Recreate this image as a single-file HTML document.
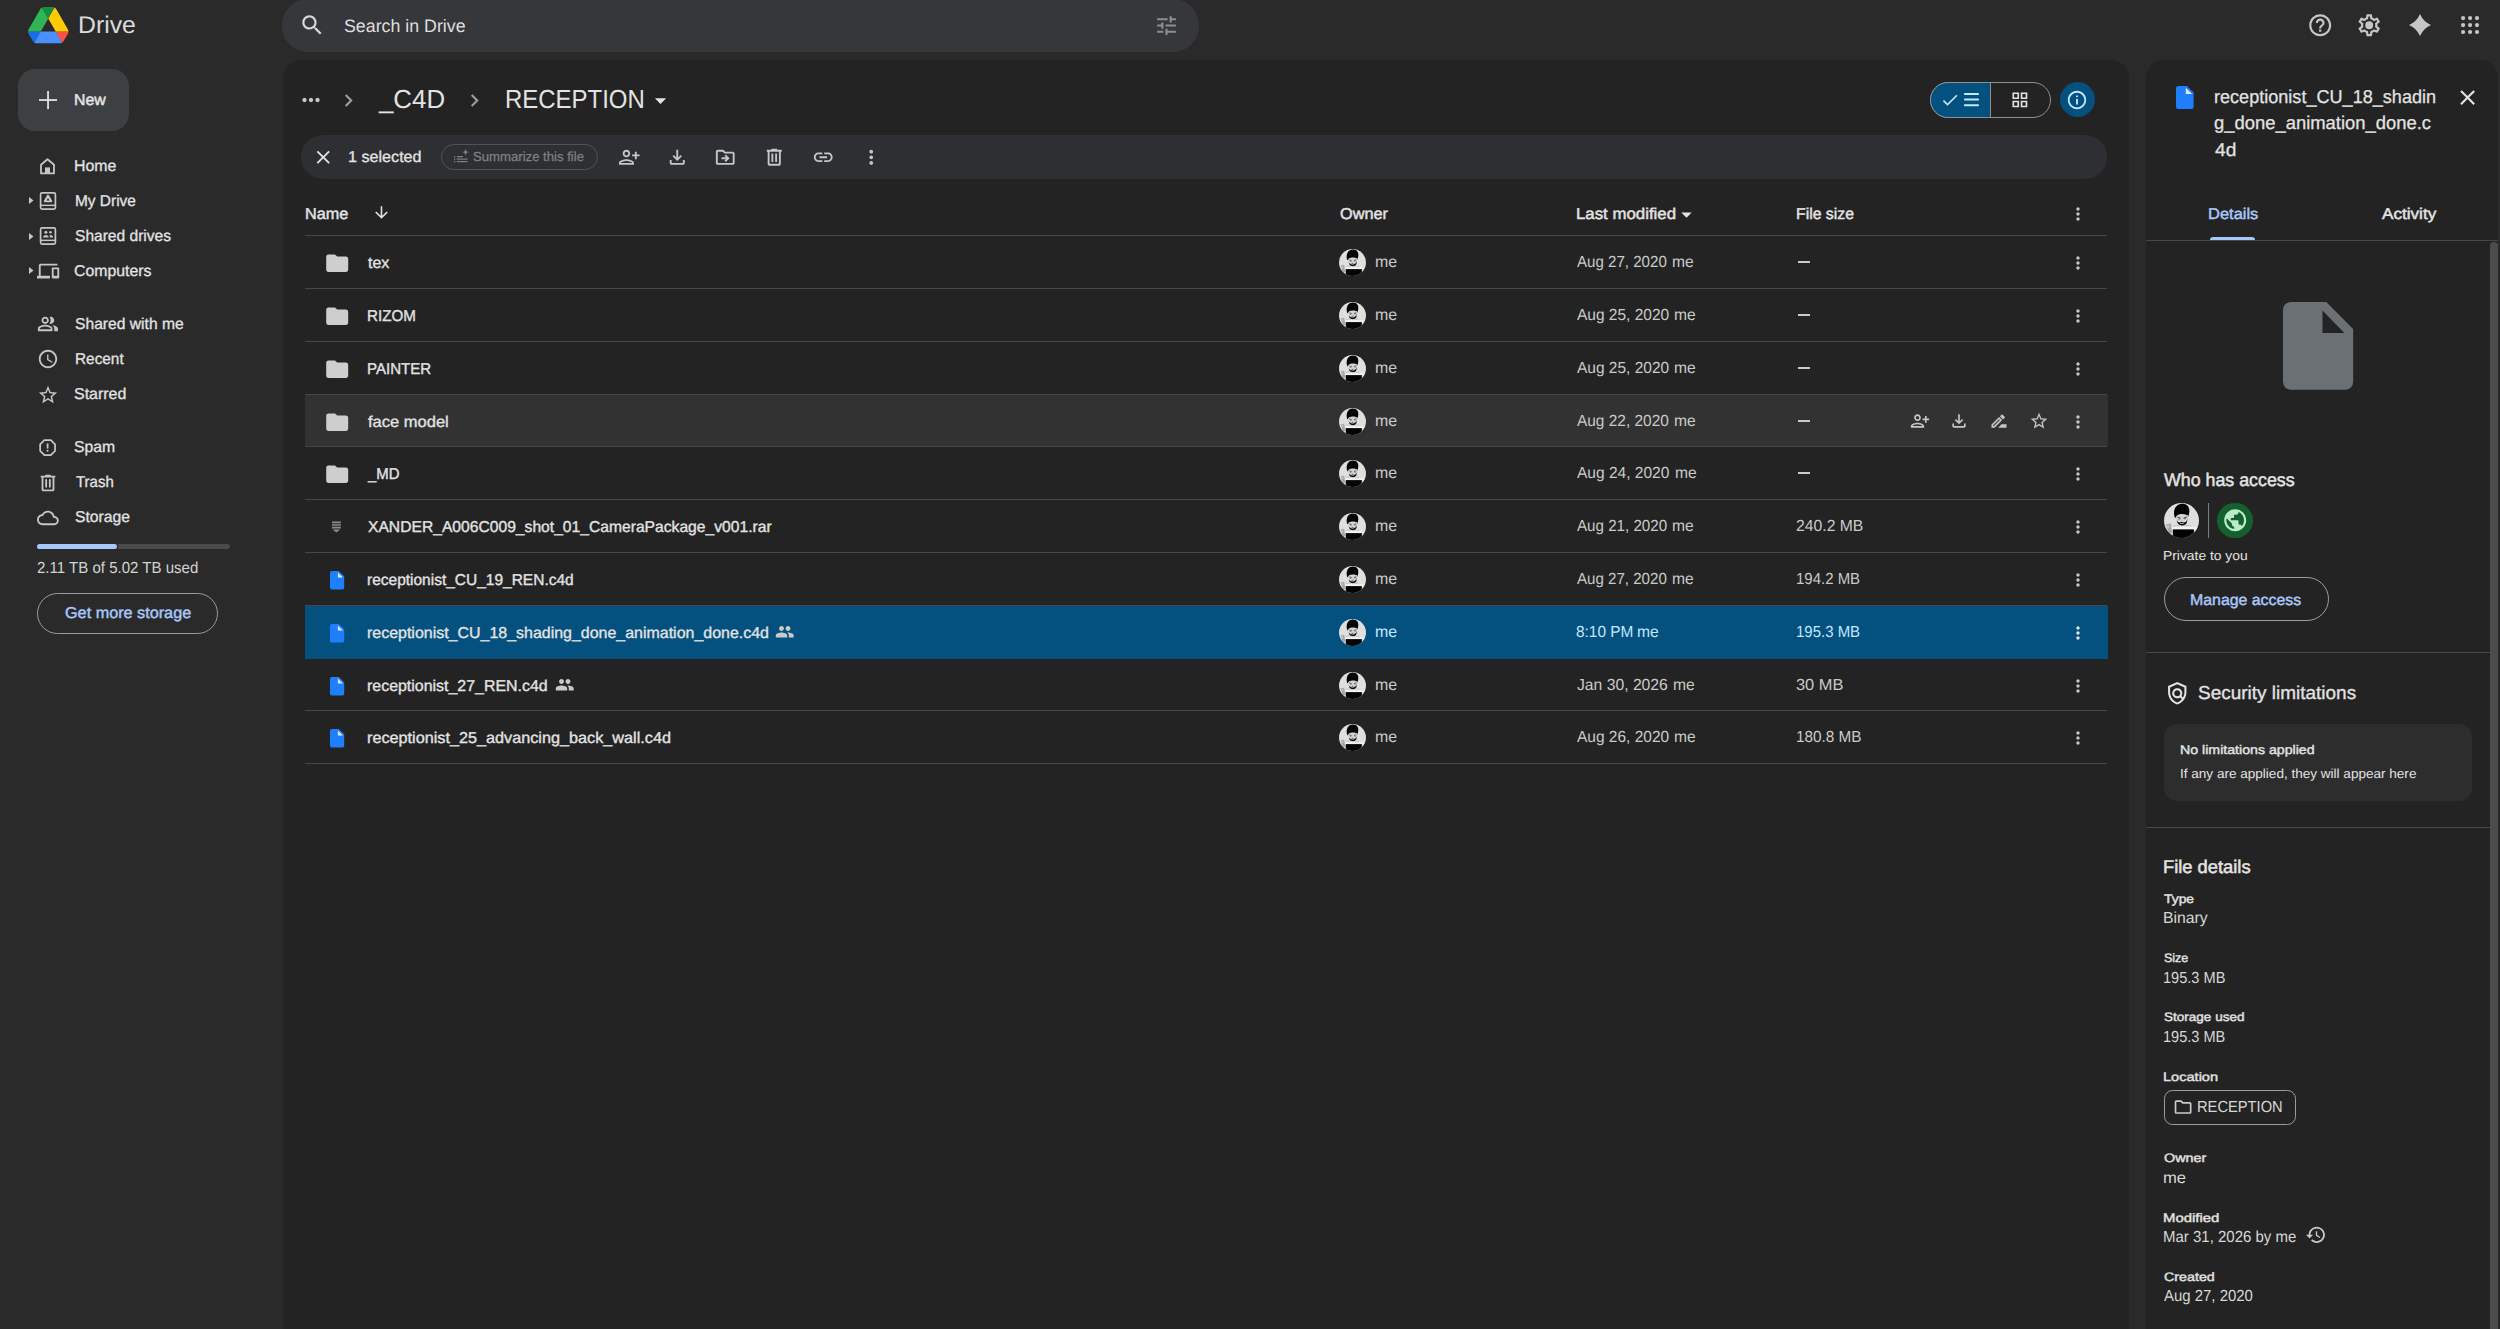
<!DOCTYPE html>
<html><head><meta charset="utf-8"><title>RECEPTION - Google Drive</title>
<style>
html,body{margin:0;padding:0;}
body{width:2500px;height:1329px;overflow:hidden;background:#2a2a2a;font-family:"Liberation Sans",sans-serif;position:relative;}
.t{position:absolute;white-space:nowrap;line-height:30px;height:30px;transform-origin:0 50%;text-rendering:geometricPrecision;}
.b{position:absolute;box-sizing:border-box;}
.ic{position:absolute;display:block;overflow:visible;}
.av{border-radius:50%;overflow:hidden;}
</style></head><body>

<svg class="ic" style="left:27.7px;top:6.5px;width:40.5px;height:36.2px" viewBox="0 0 87.3 78"><path d="m6.6 66.85 3.85 6.65c.8 1.4 1.95 2.5 3.3 3.3l13.750-23.800h-27.500c0 1.550.4 3.100 1.200 4.500z" fill="#1a6fe6"/><path d="m43.650 25-13.750-23.800c-1.350.8-2.500 1.900-3.300 3.300l-25.400 44a9.060 9.060 0 0 0 -1.200 4.500h27.500z" fill="#2fb457"/><path d="m73.550 76.800c1.350-.8 2.500-1.900 3.300-3.300l1.600-2.750 7.650-13.250c.8-1.400 1.200-2.950 1.200-4.500h-27.502l5.852 11.500z" fill="#ff5141"/><path d="m43.650 25 13.750-23.800c-1.350-.8-2.900-1.200-4.500-1.200h-18.500c-1.600 0-3.150.45-4.500 1.200z" fill="#188f3e"/><path d="m59.800 53h-32.300l-13.750 23.800c1.350.8 2.900 1.200 4.500 1.200h50.800c1.600 0 3.150-.45 4.500-1.200z" fill="#4a90ff"/><path d="m73.400 26.500-12.700-22c-.8-1.400-1.950-2.500-3.300-3.300l-13.750 23.800 16.150 28h27.450c0-1.550-.4-3.100-1.200-4.500z" fill="#ffcb05"/></svg>
<div class="t" id="t1" style="left:77.74px;top:11.00px;font-size:24.1px;color:#dcdcdc;transform:scaleX(1.0283);">Drive</div>
<div class="b" style="left:282px;top:-1px;width:917px;height:52.5px;background:#36373a;border-radius:26px;"></div>
<svg class="ic" style="left:299.4px;top:11.6px;width:26.4px;height:26.4px" viewBox="0 0 24 24" fill="#d6d8d6" ><path d="M15.5 14h-.79l-.28-.27C15.41 12.59 16 11.11 16 9.5 16 5.91 13.09 3 9.5 3S3 5.91 3 9.5 5.91 16 9.5 16c1.61 0 3.09-.59 4.23-1.57l.27.28v.79l5 4.99L20.49 19l-4.99-5zm-6 0C7.01 14 5 11.99 5 9.5S7.01 5 9.5 5 14 7.01 14 9.5 11.99 14 9.5 14z"/></svg>
<div class="t" id="t2" style="left:343.61px;top:11.00px;font-size:18.0px;color:#dfdfdf;transform:scaleX(0.9876);">Search in Drive</div>
<svg class="ic" style="left:1154.0px;top:12.5px;width:25px;height:25px" viewBox="0 0 24 24" fill="#8d9092" ><path d="M3 17v2h6v-2H3zM3 5v2h10V5H3zm10 16v-2h8v-2h-8v-2h-2v6h2zM7 9v2H3v2h4v2h2V9H7zm14 4v-2H11v2h10zm-6-4h2V7h4V5h-4V3h-2v6z"/></svg>
<svg class="ic" style="left:2307.0px;top:11.9px;width:26.4px;height:26.4px" viewBox="0 0 24 24" fill="#c4c7c5" ><path d="M11 18h2v-2h-2v2zm1-16C6.48 2 2 6.48 2 12s4.48 10 10 10 10-4.48 10-10S17.52 2 12 2zm0 18c-4.41 0-8-3.59-8-8s3.59-8 8-8 8 3.590 8 8-3.590 8-8 8zm0-14c-2.21 0-4 1.79-4 4h2c0-1.1.9-2 2-2s2 .9 2 2c0 2-3 1.75-3 5h2c0-2.25 3-2.5 3-5 0-2.21-1.79-4-4-4z"/></svg>
<svg class="ic" style="left:2355.8px;top:11.8px;width:26.4px;height:26.4px" viewBox="0 0 24 24" fill="#c4c7c5" ><path d="M19.43 12.98c.04-.32.07-.64.07-.98 0-.34-.03-.66-.07-.98l2.11-1.65c.19-.15.24-.42.12-.64l-2-3.46c-.09-.16-.26-.25-.44-.25-.06 0-.12.01-.17.03l-2.49 1c-.52-.4-1.08-.73-1.69-.98l-.38-2.65C14.46 2.18 14.25 2 14 2h-4c-.25 0-.46.18-.49.42l-.38 2.65c-.61.25-1.17.59-1.69.98l-2.49-1c-.06-.02-.12-.03-.18-.03-.17 0-.34.09-.43.25l-2 3.46c-.13.22-.07.49.12.64l2.11 1.65c-.04.32-.07.65-.07.98 0 .33.03.66.07.98l-2.11 1.65c-.19.15-.24.42-.12.64l2 3.46c.09.16.26.25.44.25.06 0 .12-.01.17-.03l2.49-1c.52.4 1.08.73 1.69.98l.38 2.65c.03.24.24.42.49.42h4c.25 0 .46-.18.49-.42l.38-2.65c.61-.25 1.17-.59 1.69-.98l2.49 1c.06.02.12.03.18.03.17 0 .34-.09.43-.25l2-3.46c.12-.22.07-.49-.12-.64l-2.11-1.65zm-1.980-1.710c.04.31.05.52.05.73 0 .21-.02.43-.05.73l-.14 1.130.89.7 1.080.84-.7 1.210-1.270-.51-1.040-.42-.9.68c-.43.32-.84.56-1.250.73l-1.060.43-.16 1.130-.2 1.350h-1.400l-.19-1.350-.16-1.130-1.060-.43c-.43-.18-.83-.41-1.230-.71l-.91-.7-1.060.43-1.270.51-.7-1.210 1.080-.84.89-.7-.14-1.130c-.03-.31-.05-.54-.05-.74s.02-.43.05-.73l.14-1.130-.89-.7-1.080-.84.7-1.210 1.270.51 1.040.42.9-.68c.43-.32.84-.56 1.250-.73l1.060-.43.16-1.130.2-1.350h1.390l.19 1.350.16 1.130 1.060.43c.43.18.83.41 1.230.71l.91.7 1.060-.43 1.270-.51.7 1.210-1.070.85-.89.7.14 1.130zM12 8.400a3.600 3.600 0 1 0 0 7.200 3.600 3.600 0 0 0 0-7.200z"/></svg>
<svg class="ic" style="left:2408.0px;top:13.1px;width:24px;height:24px" viewBox="0 0 24 24" fill="#c4c7c5" ><path d="M12 1Q15.300 8.700 23 12 15.300 15.300 12 23 8.700 15.300 1 12 8.700 8.700 12 1z"/></svg>
<svg class="ic" style="left:2461.1px;top:16.2px;width:18.1px;height:18.1px" viewBox="0 0 18.1 18.1" fill="#c4c7c5"><circle cx="2.1" cy="2.1" r="2.1"/><circle cx="2.1" cy="9.05" r="2.1"/><circle cx="2.1" cy="16.0" r="2.1"/><circle cx="9.05" cy="2.1" r="2.1"/><circle cx="9.05" cy="9.05" r="2.1"/><circle cx="9.05" cy="16.0" r="2.1"/><circle cx="16.0" cy="2.1" r="2.1"/><circle cx="16.0" cy="9.05" r="2.1"/><circle cx="16.0" cy="16.0" r="2.1"/></svg>
<div class="b" style="left:18px;top:69px;width:111px;height:62px;background:#3d4043;border-radius:17px;"></div>
<svg class="ic" style="left:38.950px;top:91.050px;width:18.100px;height:18.100px" viewBox="0 0 18.100 18.100" fill="#e3e3e3"><rect x="8.150" width="1.800" height="18.100"/><rect y="8.150" width="18.100" height="1.800"/></svg>
<div class="t" id="t3" style="left:74.49px;top:86.00px;font-size:15.7px;color:#e3e3e3;-webkit-text-stroke:0.5px #e3e3e3;transform:scaleX(1.0097);">New</div>
<svg class="ic" style="left:40.300px;top:157.7px;width:15px;height:16.400px" viewBox="0 0 15 16.400" fill="#c4c7c5"><path d="M7.500 1.200L1 6.800V15.400h13V6.800z" fill="none" stroke="#c4c7c5" stroke-width="1.800" stroke-linejoin="round"/><path d="M5 9.400h5V15.400H5z"/></svg>
<div class="t" id="t4" style="left:74.49px;top:152.00px;font-size:15.7px;color:#e3e3e3;-webkit-text-stroke:0.3px #e3e3e3;transform:scaleX(1.0125);">Home</div>
<svg class="ic" style="left:39.00px;top:191.80px;width:18px;height:18px" viewBox="0 0 16.6 18" fill="#c4c7c5" ><path d="M2.400 .900h11.800a1.500 1.500 0 0 1 1.500 1.500v13.200a1.500 1.500 0 0 1-1.500 1.500H2.400a1.500 1.500 0 0 1-1.500-1.500V2.400A1.500 1.500 0 0 1 2.400 .900z" fill="none" stroke="#c4c7c5" stroke-width="1.700"/><path d="M1 12.600h14.600v1.500H1z"/><path d="M8.300 3.600l3.300 5.600H5z" stroke="#c4c7c5" stroke-width="2" stroke-linejoin="round"/><path d="M8.300 6.100L6.900 8.500h2.800z" fill="#2a2a2a"/></svg>
<svg class="ic" style="left:28.6px;top:197.3px;width:4.5px;height:7px" viewBox="0 0 4.5 7" fill="#c4c7c5"><path d="M0 0l4.500 3.500-4.500 3.500z"/></svg>
<div class="t" id="t5" style="left:74.52px;top:187.00px;font-size:15.7px;color:#e3e3e3;-webkit-text-stroke:0.3px #e3e3e3;transform:scaleX(0.9836);">My Drive</div>
<svg class="ic" style="left:39.00px;top:227.00px;width:18px;height:18px" viewBox="0 0 16.6 18" fill="#c4c7c5" ><path d="M2.400 .900h11.800a1.500 1.500 0 0 1 1.500 1.500v13.200a1.500 1.500 0 0 1-1.500 1.500H2.400a1.500 1.500 0 0 1-1.500-1.500V2.400A1.500 1.500 0 0 1 2.400 .900z" fill="none" stroke="#c4c7c5" stroke-width="1.700"/><path d="M1 12.600h14.600v1.500H1z"/><circle cx="6.200" cy="5.200" r="1.500"/><circle cx="10.800" cy="5.300" r="1.300"/><path d="M3.400 10.400c0-1.800 1.800-2.500 2.800-2.500s2.800.7 2.800 2.500zM9.800 8c.3-.1.700-.1 1-.1 1 0 2.600.7 2.600 2.500h-3.200c0-1-.1-1.700-.4-2.400z"/></svg>
<svg class="ic" style="left:28.6px;top:232.5px;width:4.5px;height:7px" viewBox="0 0 4.5 7" fill="#c4c7c5"><path d="M0 0l4.500 3.500-4.500 3.500z"/></svg>
<div class="t" id="t6" style="left:74.51px;top:222.00px;font-size:15.7px;color:#e3e3e3;-webkit-text-stroke:0.3px #e3e3e3;transform:scaleX(0.9917);">Shared drives</div>
<svg class="ic" style="left:37.1px;top:259.5px;width:22.2px;height:22.2px" viewBox="0 0 24 24" fill="#c4c7c5" ><path d="M4 6h18V4H4c-1.100 0-2 .9-2 2v11H0v3h14v-3H4V6zm19 2h-6c-.55 0-1 .45-1 1v10c0 .55.45 1 1 1h6c.55 0 1-.45 1-1V9c0-.55-.45-1-1-1zm-1 9h-4v-7h4v7z"/></svg>
<svg class="ic" style="left:28.6px;top:267.3px;width:4.5px;height:7px" viewBox="0 0 4.5 7" fill="#c4c7c5"><path d="M0 0l4.500 3.500-4.500 3.500z"/></svg>
<div class="t" id="t7" style="left:74.49px;top:257.00px;font-size:15.7px;color:#e3e3e3;-webkit-text-stroke:0.3px #e3e3e3;transform:scaleX(1.0105);">Computers</div>
<svg class="ic" style="left:37.0px;top:312.5px;width:21.8px;height:21.8px" viewBox="0 0 24 24" fill="#c4c7c5" ><path d="M16.670 13.130C18.040 14.060 19 15.320 19 17v3h4v-3c0-2.180-3.570-3.470-6.330-3.870zM15 12c2.210 0 4-1.790 4-4s-1.790-4-4-4c-.47 0-.91.1-1.330.24C14.500 5.270 15 6.580 15 8s-.5 2.730-1.330 3.760c.42.14.86.24 1.330.24zM9 12c2.210 0 4-1.790 4-4s-1.790-4-4-4-4 1.790-4 4 1.790 4 4 4zm0-6c1.100 0 2 .9 2 2s-.9 2-2 2-2-.9-2-2 .9-2 2-2zM9 13c-2.670 0-8 1.340-8 4v3h16v-3c0-2.660-5.330-4-8-4zm6 5H3v-.99C3.200 16.290 6.300 15 9 15s5.800 1.290 6 2v1z"/></svg>
<div class="t" id="t8" style="left:74.50px;top:310.00px;font-size:15.7px;color:#e3e3e3;-webkit-text-stroke:0.3px #e3e3e3;transform:scaleX(0.9972);">Shared with me</div>
<svg class="ic" style="left:37.0px;top:348.0px;width:22px;height:22px" viewBox="0 0 24 24" fill="#c4c7c5" ><path d="M11.990 2C6.470 2 2 6.480 2 12s4.470 10 9.990 10C17.520 22 22 17.520 22 12S17.520 2 11.990 2zM12 20c-4.420 0-8-3.580-8-8s3.580-8 8-8 8 3.580 8 8-3.580 8-8 8zm.5-13H11v6l5.250 3.150.75-1.230-4.500-2.670z"/></svg>
<div class="t" id="t9" style="left:74.52px;top:345.00px;font-size:15.7px;color:#e3e3e3;-webkit-text-stroke:0.3px #e3e3e3;transform:scaleX(0.9796);">Recent</div>
<svg class="ic" style="left:37.0px;top:384.0px;width:22px;height:22px" viewBox="0 0 24 24" fill="#c4c7c5" ><path d="M22 9.240l-7.190-.62L12 2 9.190 8.630 2 9.240l5.460 4.730L5.820 21 12 17.270 18.180 21l-1.630-7.030L22 9.240zM12 15.400l-3.760 2.270 1-4.280-3.320-2.880 4.380-.38L12 6.100l1.710 4.040 4.380.38-3.320 2.880 1 4.280L12 15.400z"/></svg>
<div class="t" id="t10" style="left:74.48px;top:380.00px;font-size:15.7px;color:#e3e3e3;-webkit-text-stroke:0.3px #e3e3e3;transform:scaleX(1.0180);">Starred</div>
<svg class="ic" style="left:39.30px;top:438.80px;width:17.2px;height:17.2px" viewBox="0 0 18 18" fill="#c4c7c5" ><path d="M5.600 1.200h6.800l4.400 4.400v6.800l-4.400 4.400H5.600L1.200 12.400V5.600z" fill="none" stroke="#c4c7c5" stroke-width="1.800" stroke-linejoin="round"/><path d="M8.100 4.600h1.800v5.400H8.100z"/><circle cx="9" cy="12.300" r="1.050"/></svg>
<div class="t" id="t11" style="left:74.49px;top:433.00px;font-size:15.7px;color:#e3e3e3;-webkit-text-stroke:0.3px #e3e3e3;transform:scaleX(1.0051);">Spam</div>
<svg class="ic" style="left:36.9px;top:471.8px;width:22px;height:22px" viewBox="0 0 24 24" fill="#c4c7c5" ><path d="M7 21c-.55 0-1.020-.2-1.410-.59C5.200 20.020 5 19.550 5 19V6H4V4h5V3h6v1h5v2h-1v13c0 .55-.2 1.020-.59 1.410-.39.39-.86.59-1.410.59H7zM17 6H7v13h10V6zM9 17h2V8H9v9zm4 0h2V8h-2v9z"/></svg>
<div class="t" id="t12" style="left:75.50px;top:468.00px;font-size:15.7px;color:#e3e3e3;-webkit-text-stroke:0.3px #e3e3e3;transform:scaleX(0.9564);">Trash</div>
<svg class="ic" style="left:37.1px;top:507.3px;width:21.8px;height:21.8px" viewBox="0 0 24 24" fill="#c4c7c5" ><path d="M19.350 10.040C18.670 6.590 15.640 4 12 4 9.110 4 6.600 5.640 5.350 8.040 2.340 8.360 0 10.910 0 14c0 3.310 2.690 6 6 6h13c2.760 0 5-2.240 5-5 0-2.640-2.050-4.780-4.650-4.960zM19 18H6c-2.210 0-4-1.790-4-4 0-2.050 1.530-3.760 3.560-3.970l1.070-.11.5-.95C8.080 7.140 9.940 6 12 6c2.620 0 4.880 1.860 5.390 4.430l.3 1.500 1.530.11c1.560.1 2.780 1.410 2.780 2.960 0 1.650-1.350 3-3 3z"/></svg>
<div class="t" id="t13" style="left:74.50px;top:503.00px;font-size:15.7px;color:#e3e3e3;-webkit-text-stroke:0.3px #e3e3e3;transform:scaleX(1.0019);">Storage</div>
<div class="b" style="left:37px;top:544px;width:193px;height:5px;background:#4a4c4b;border-radius:2.5px;"></div>
<div class="b" style="left:37px;top:544px;width:79.5px;height:5px;background:#a8c7fa;border-radius:2.5px;box-shadow:1.500px 0 0 #2a2a2a;"></div>
<div class="t" id="t14" style="left:36.96px;top:554.00px;font-size:16.0px;color:#d3d5d3;transform:scaleX(0.9394);">2.11 TB of 5.02 TB used</div>
<div class="b" style="left:37px;top:593px;width:181px;height:41px;background:transparent;border-radius:20.5px;border:1px solid #9a9d9b;"></div>
<div class="t" id="t15" style="left:65.10px;top:599.00px;font-size:15.7px;color:#a8c7fa;-webkit-text-stroke:0.45px #a8c7fa;transform:scaleX(1.0336);">Get more storage</div>
<div class="b" style="left:283px;top:60px;width:1846px;height:1290px;background:#232323;border-radius:18px;"></div>
<svg class="ic" style="left:298.0px;top:87.0px;width:26px;height:26px" viewBox="0 0 24 24" fill="#c4c7c5" ><path d="M6 10c-1.100 0-2 .9-2 2s.9 2 2 2 2-.9 2-2-.9-2-2-2zm12 0c-1.100 0-2 .9-2 2s.9 2 2 2 2-.9 2-2-.9-2-2-2zm-6 0c-1.100 0-2 .9-2 2s.9 2 2 2 2-.9 2-2-.9-2-2-2z"/></svg>
<svg class="ic" style="left:335.7px;top:87.8px;width:25px;height:25px" viewBox="0 0 24 24" fill="#9aa0a6" ><path d="M10 6L8.590 7.410 13.170 12l-4.580 4.590L10 18l6-6z"/></svg>
<div class="t" id="t16" style="left:379.30px;top:84.00px;font-size:26px;color:#e3e3e3;transform:scaleX(0.9938);">_C4D</div>
<svg class="ic" style="left:461.8px;top:87.8px;width:25px;height:25px" viewBox="0 0 24 24" fill="#9aa0a6" ><path d="M10 6L8.590 7.410 13.170 12l-4.580 4.590L10 18l6-6z"/></svg>
<div class="t" id="t17" style="left:505.06px;top:84.00px;font-size:26px;color:#e3e3e3;transform:scaleX(0.9216);">RECEPTION</div>
<svg class="ic" style="left:646.5px;top:86.7px;width:27px;height:27px" viewBox="0 0 24 24" fill="#e3e3e3" ><path d="M7 10l5 5 5-5z"/></svg>
<div class="b" style="left:1930px;top:82px;width:120.5px;height:35.5px;background:transparent;border-radius:18px;border:1px solid #8e918f;"></div>
<div class="b" style="left:1930px;top:82px;width:60.5px;height:35.5px;background:#04507e;border:1px solid #8e918f;border-radius:18px 0 0 18px;"></div>
<svg class="ic" style="left:1939.6px;top:89.7px;width:20px;height:20px" viewBox="0 0 24 24" fill="#c2e7ff" ><path d="M9 16.170L4.830 12l-1.420 1.410L9 19 21 7l-1.410-1.410z"/></svg>
<svg class="ic" style="left:1964.200px;top:92.100px;width:15px;height:15.200px" viewBox="0 0 15 15.200" fill="#c2e7ff"><rect width="15" height="2" y="1" rx=".8"/><rect width="15" height="2" y="6.600" rx=".8"/><rect width="15" height="2" y="12.200" rx=".8"/></svg>
<svg class="ic" style="left:2009.8px;top:90.0px;width:19.8px;height:19.8px" viewBox="0 0 24 24" fill="#e3e3e3" ><path d="M3 3v8h8V3H3zm6 6H5V5h4v4zm-6 4v8h8v-8H3zm6 6H5v-4h4v4zm4-16v8h8V3h-8zm6 6h-4V5h4v4zm-6 4v8h8v-8h-8zm6 6h-4v-4h4v4z"/></svg>
<div class="b" style="left:2059.8px;top:82px;width:35px;height:35px;background:#04507e;border-radius:18px;"></div>
<svg class="ic" style="left:2066.2px;top:88.9px;width:22px;height:22px" viewBox="0 0 24 24" fill="#c2e7ff" ><path d="M11 7h2v2h-2zm0 4h2v6h-2zm1-9C6.480 2 2 6.480 2 12s4.480 10 10 10 10-4.480 10-10S17.520 2 12 2zm0 18c-4.410 0-8-3.590-8-8s3.590-8 8-8 8 3.590 8 8-3.590 8-8 8z"/></svg>
<div class="b" style="left:301px;top:135px;width:1806px;height:44px;background:#2e2f32;border-radius:22px;"></div>
<svg class="ic" style="left:311.9px;top:145.8px;width:22.5px;height:22.5px" viewBox="0 0 24 24" fill="#e3e3e3" ><path d="M19 6.410L17.590 5 12 10.590 6.410 5 5 6.410 10.590 12 5 17.590 6.410 19 12 13.410 17.590 19 19 17.590 13.410 12z"/></svg>
<div class="t" id="t18" style="left:347.87px;top:143.00px;font-size:15.7px;color:#e3e3e3;-webkit-text-stroke:0.3px #e3e3e3;transform:scaleX(1.0286);">1 selected</div>
<div class="b" style="left:441px;top:144px;width:157px;height:26px;background:transparent;border-radius:13px;border:1px solid #505355;"></div>
<div class="t" id="t19" style="left:472.90px;top:142.00px;font-size:13.1px;color:#7c7f81;-webkit-text-stroke:0.3px #7c7f81;transform:scaleX(1.0037);">Summarize this file</div>
<svg class="ic" style="left:453.600px;top:148.700px;width:14.500px;height:13.500px" viewBox="0 0 14.500 13.500" fill="#7c7f81"><path d="M0 7h1.400v1.200H0zM2.800 7h6.200v1.200H2.800zM0 9.600h1.400v1.200H0zM2.800 9.600h10.700v1.200H2.800zM0 12.100h1.400v1.200H0zM2.800 12.100h10.700v1.200H2.800zM11.500 0l1 2.300 2 .9-2 .9-1 2.300-1-2.300-2-.9 2-.9z"/></svg>
<svg class="ic" style="left:617.8px;top:145.6px;width:22.5px;height:22.5px" viewBox="0 0 24 24" fill="#c4c7c5" ><path d="M9 12c2.210 0 4-1.790 4-4s-1.790-4-4-4-4 1.790-4 4 1.790 4 4 4zm0-6c1.100 0 2 .9 2 2s-.9 2-2 2-2-.9-2-2 .9-2 2-2zm0 8c-2.670 0-8 1.340-8 4v2h16v-2c0-2.660-5.330-4-8-4zm6 4H3v-.010C3.200 17.290 6.300 16 9 16s5.800 1.290 6 2zM20 9V6h-2v3h-3v2h3v3h2v-3h3V9h-3z"/></svg>
<svg class="ic" style="left:665.8px;top:145.6px;width:22.5px;height:22.5px" viewBox="0 0 24 24" fill="#c4c7c5" ><path d="M12 16l-5-5 1.400-1.450 2.600 2.600V4h2v8.150l2.600-2.600L17 11l-5 5zM6 20c-.55 0-1.020-.2-1.410-.59C4.200 19.020 4 18.550 4 18v-3h2v3h12v-3h2v3c0 .55-.2 1.020-.59 1.410-.39.39-.86.59-1.410.59H6z"/></svg>
<svg class="ic" style="left:713.8px;top:145.6px;width:22.5px;height:22.5px" viewBox="0 0 24 24" fill="#c4c7c5" ><path d="M20 6h-8l-2-2H4c-1.100 0-2 .9-2 2v12c0 1.100.9 2 2 2h16c1.100 0 2-.9 2-2V8c0-1.100-.9-2-2-2zm0 12H4V6h5.170l2 2H20v10zm-7.160-4H8v-2h4.840l-1.590-1.590L12.660 9l4 4-4 4-1.410-1.410L12.840 14z"/></svg>
<svg class="ic" style="left:762.8px;top:145.6px;width:22.5px;height:22.5px" viewBox="0 0 24 24" fill="#c4c7c5" ><path d="M7 21c-.55 0-1.020-.2-1.410-.59C5.200 20.020 5 19.550 5 19V6H4V4h5V3h6v1h5v2h-1v13c0 .55-.2 1.020-.59 1.410-.39.39-.86.59-1.410.59H7zM17 6H7v13h10V6zM9 17h2V8H9v9zm4 0h2V8h-2v9z"/></svg>
<svg class="ic" style="left:811.8px;top:145.6px;width:22.5px;height:22.5px" viewBox="0 0 24 24" fill="#c4c7c5" ><path d="M3.900 12c0-1.710 1.390-3.100 3.100-3.100h4V7H7c-2.760 0-5 2.240-5 5s2.240 5 5 5h4v-1.900H7c-1.710 0-3.100-1.390-3.100-3.100zM8 13h8v-2H8v2zm9-6h-4v1.900h4c1.710 0 3.100 1.390 3.100 3.100s-1.390 3.100-3.100 3.100h-4V17h4c2.760 0 5-2.240 5-5s-2.240-5-5-5z"/></svg>
<svg class="ic" style="left:859.8px;top:145.6px;width:22.5px;height:22.5px" viewBox="0 0 24 24" fill="#c4c7c5" ><path d="M12 8c1.100 0 2-.9 2-2s-.9-2-2-2-2 .9-2 2 .9 2 2 2zm0 2c-1.100 0-2 .9-2 2s.9 2 2 2 2-.9 2-2-.9-2-2-2zm0 6c-1.100 0-2 .9-2 2s.9 2 2 2 2-.9 2-2-.9-2-2-2z"/></svg>
<div class="t" id="t20" style="left:305.26px;top:200.00px;font-size:15.7px;color:#e3e3e3;-webkit-text-stroke:0.45px #e3e3e3;transform:scaleX(1.0350);">Name</div>
<svg class="ic" style="left:371.7px;top:203.2px;width:19px;height:19px" viewBox="0 0 24 24" fill="#e3e3e3" ><path d="M20 12l-1.410-1.410L13 16.170V4h-2v12.170l-5.580-5.590L4 12l8 8 8-8z"/></svg>
<div class="t" id="t21" style="left:1340.40px;top:200.00px;font-size:15.7px;color:#e3e3e3;-webkit-text-stroke:0.45px #e3e3e3;transform:scaleX(1.0370);">Owner</div>
<div class="t" id="t22" style="left:1575.63px;top:200.00px;font-size:15.7px;color:#e3e3e3;-webkit-text-stroke:0.45px #e3e3e3;transform:scaleX(1.0717);">Last modified</div>
<svg class="ic" style="left:1673.7px;top:201.5px;width:25px;height:25px" viewBox="0 0 24 24" fill="#e3e3e3" ><path d="M7 10l5 5 5-5z"/></svg>
<div class="t" id="t23" style="left:1795.89px;top:200.00px;font-size:15.7px;color:#e3e3e3;-webkit-text-stroke:0.45px #e3e3e3;transform:scaleX(1.0071);">File size</div>
<svg class="ic" style="left:2068.0px;top:203.7px;width:20px;height:20px" viewBox="0 0 24 24" fill="#c4c7c5" ><path d="M12 8c1.100 0 2-.9 2-2s-.9-2-2-2-2 .9-2 2 .9 2 2 2zm0 2c-1.100 0-2 .9-2 2s.9 2 2 2 2-.9 2-2-.9-2-2-2zm0 6c-1.100 0-2 .9-2 2s.9 2 2 2 2-.9 2-2-.9-2-2-2z"/></svg>
<div class="b" style="left:305px;top:235px;width:1802px;height:1px;background:#474747;"></div>
<svg class="ic" style="left:323.6px;top:249.5px;width:26.4px;height:26.4px" viewBox="0 0 24 24" fill="#cecece" ><path d="M10 4H4c-1.100 0-1.990.9-1.990 2L2 18c0 1.100.9 2 2 2h16c1.100 0 2-.9 2-2V8c0-1.100-.9-2-2-2h-8l-2-2z"/></svg>
<div class="t" id="t24" style="left:367.90px;top:249.00px;font-size:15.7px;color:#e3e3e3;-webkit-text-stroke:0.35px #e3e3e3;transform:scaleX(1.0190);">tex</div>
<svg class="ic av" style="left:1339.40px;top:248.60px;width:27px;height:27px" viewBox="0 0 100 100"><g><rect width="100" height="100" fill="#dfdfdf"/><path d="M34 36C42 29 60 28 67 34L65.500 53C62 66 42 66 37 53z" fill="#d4d4d4"/><path d="M29 36C25 12 40 1 52 2 67 2 75 14 70.500 31L68.500 39C64 29 46 30 36.500 35L31.500 43z" fill="#040404"/><path d="M60 33l8 1-1 7z" fill="#b8b8b8"/><path d="M38 40.500l9 2M55 42.500l9.500-2.500" stroke="#1c1c1c" stroke-width="2.200"/><ellipse cx="43" cy="45" rx="3.200" ry="1.400" fill="#3a3a3a"/><ellipse cx="59.500" cy="44.700" rx="3.200" ry="1.400" fill="#3a3a3a"/><path d="M50.500 45l-2.500 8h6z" fill="#bdbdbd"/><path d="M35.500 44C37 52 39 55 43 55.500L50 54l7 1.500C62 55 64.500 51 66.500 43L65 54C62 67 42 67 37 54z" fill="#161616"/><path d="M38 54C42 66 60 66 64.500 54 60 57 42 57 38 54z" fill="#121212"/><rect x="45" y="57.500" width="11" height="2" rx="1" fill="#c9c9c9"/><path d="M26 66C33 61 41 63 44 64.500M58 64.500C62 63 70 62 75 66" stroke="#9d9d9d" stroke-width="1.400" fill="none"/><rect x="22" y="67.500" width="70" height="8" fill="#f2f2f2"/><path d="M5.500 60l14-2 3.500 26-9 2z" fill="#a6a6a6"/><path d="M8 62l6-1 1.500 9-5 1z" fill="#c4c4c4"/><rect x="25" y="74.500" width="59.500" height="30" fill="#040404"/></g></svg>
<div class="t" id="t25" style="left:1374.90px;top:248.00px;font-size:16.0px;color:#c9cbc9;transform:scaleX(0.9952);">me</div>
<div class="t" id="t26" style="left:1576.70px;top:248.00px;font-size:16.0px;color:#c9cbc9;transform:scaleX(0.9432);">Aug 27, 2020</div>
<div class="t" id="t27" style="left:1672.02px;top:248.00px;font-size:16.0px;color:#c9cbc9;transform:scaleX(0.9762);">me</div>
<div class="b" style="left:1797.5px;top:261px;width:12.3px;height:1.5px;background:#c9cbc9;"></div>
<svg class="ic" style="left:2068.0px;top:252.6px;width:20px;height:20px" viewBox="0 0 24 24" fill="#c4c7c5" ><path d="M12 8c1.100 0 2-.9 2-2s-.9-2-2-2-2 .9-2 2 .9 2 2 2zm0 2c-1.100 0-2 .9-2 2s.9 2 2 2 2-.9 2-2-.9-2-2-2zm0 6c-1.100 0-2 .9-2 2s.9 2 2 2 2-.9 2-2-.9-2-2-2z"/></svg>
<div class="b" style="left:305px;top:288px;width:1802px;height:1px;background:#474747;"></div>
<svg class="ic" style="left:323.6px;top:302.5px;width:26.4px;height:26.4px" viewBox="0 0 24 24" fill="#cecece" ><path d="M10 4H4c-1.100 0-1.990.9-1.990 2L2 18c0 1.100.9 2 2 2h16c1.100 0 2-.9 2-2V8c0-1.100-.9-2-2-2h-8l-2-2z"/></svg>
<div class="t" id="t28" style="left:366.93px;top:302.00px;font-size:15.7px;color:#e3e3e3;-webkit-text-stroke:0.35px #e3e3e3;transform:scaleX(0.9673);">RIZOM</div>
<svg class="ic av" style="left:1339.40px;top:301.60px;width:27px;height:27px" viewBox="0 0 100 100"><g><rect width="100" height="100" fill="#dfdfdf"/><path d="M34 36C42 29 60 28 67 34L65.500 53C62 66 42 66 37 53z" fill="#d4d4d4"/><path d="M29 36C25 12 40 1 52 2 67 2 75 14 70.500 31L68.500 39C64 29 46 30 36.500 35L31.500 43z" fill="#040404"/><path d="M60 33l8 1-1 7z" fill="#b8b8b8"/><path d="M38 40.500l9 2M55 42.500l9.500-2.500" stroke="#1c1c1c" stroke-width="2.200"/><ellipse cx="43" cy="45" rx="3.200" ry="1.400" fill="#3a3a3a"/><ellipse cx="59.500" cy="44.700" rx="3.200" ry="1.400" fill="#3a3a3a"/><path d="M50.500 45l-2.500 8h6z" fill="#bdbdbd"/><path d="M35.500 44C37 52 39 55 43 55.500L50 54l7 1.500C62 55 64.500 51 66.500 43L65 54C62 67 42 67 37 54z" fill="#161616"/><path d="M38 54C42 66 60 66 64.500 54 60 57 42 57 38 54z" fill="#121212"/><rect x="45" y="57.500" width="11" height="2" rx="1" fill="#c9c9c9"/><path d="M26 66C33 61 41 63 44 64.500M58 64.500C62 63 70 62 75 66" stroke="#9d9d9d" stroke-width="1.400" fill="none"/><rect x="22" y="67.500" width="70" height="8" fill="#f2f2f2"/><path d="M5.500 60l14-2 3.500 26-9 2z" fill="#a6a6a6"/><path d="M8 62l6-1 1.500 9-5 1z" fill="#c4c4c4"/><rect x="25" y="74.500" width="59.500" height="30" fill="#040404"/></g></svg>
<div class="t" id="t29" style="left:1374.90px;top:301.00px;font-size:16.0px;color:#c9cbc9;transform:scaleX(0.9952);">me</div>
<div class="t" id="t30" style="left:1576.70px;top:301.00px;font-size:16.0px;color:#c9cbc9;transform:scaleX(0.9674);">Aug 25, 2020</div>
<div class="t" id="t31" style="left:1674.32px;top:301.00px;font-size:16.0px;color:#c9cbc9;transform:scaleX(0.9762);">me</div>
<div class="b" style="left:1797.5px;top:314px;width:12.3px;height:1.5px;background:#c9cbc9;"></div>
<svg class="ic" style="left:2068.0px;top:305.6px;width:20px;height:20px" viewBox="0 0 24 24" fill="#c4c7c5" ><path d="M12 8c1.100 0 2-.9 2-2s-.9-2-2-2-2 .9-2 2 .9 2 2 2zm0 2c-1.100 0-2 .9-2 2s.9 2 2 2 2-.9 2-2-.9-2-2-2zm0 6c-1.100 0-2 .9-2 2s.9 2 2 2 2-.9 2-2-.9-2-2-2z"/></svg>
<div class="b" style="left:305px;top:341px;width:1802px;height:1px;background:#474747;"></div>
<svg class="ic" style="left:323.6px;top:355.5px;width:26.4px;height:26.4px" viewBox="0 0 24 24" fill="#cecece" ><path d="M10 4H4c-1.100 0-1.990.9-1.990 2L2 18c0 1.100.9 2 2 2h16c1.100 0 2-.9 2-2V8c0-1.100-.9-2-2-2h-8l-2-2z"/></svg>
<div class="t" id="t32" style="left:366.94px;top:355.00px;font-size:15.7px;color:#e3e3e3;-webkit-text-stroke:0.35px #e3e3e3;transform:scaleX(0.9600);">PAINTER</div>
<svg class="ic av" style="left:1339.40px;top:354.60px;width:27px;height:27px" viewBox="0 0 100 100"><g><rect width="100" height="100" fill="#dfdfdf"/><path d="M34 36C42 29 60 28 67 34L65.500 53C62 66 42 66 37 53z" fill="#d4d4d4"/><path d="M29 36C25 12 40 1 52 2 67 2 75 14 70.500 31L68.500 39C64 29 46 30 36.500 35L31.500 43z" fill="#040404"/><path d="M60 33l8 1-1 7z" fill="#b8b8b8"/><path d="M38 40.500l9 2M55 42.500l9.500-2.500" stroke="#1c1c1c" stroke-width="2.200"/><ellipse cx="43" cy="45" rx="3.200" ry="1.400" fill="#3a3a3a"/><ellipse cx="59.500" cy="44.700" rx="3.200" ry="1.400" fill="#3a3a3a"/><path d="M50.500 45l-2.500 8h6z" fill="#bdbdbd"/><path d="M35.500 44C37 52 39 55 43 55.500L50 54l7 1.500C62 55 64.500 51 66.500 43L65 54C62 67 42 67 37 54z" fill="#161616"/><path d="M38 54C42 66 60 66 64.500 54 60 57 42 57 38 54z" fill="#121212"/><rect x="45" y="57.500" width="11" height="2" rx="1" fill="#c9c9c9"/><path d="M26 66C33 61 41 63 44 64.500M58 64.500C62 63 70 62 75 66" stroke="#9d9d9d" stroke-width="1.400" fill="none"/><rect x="22" y="67.500" width="70" height="8" fill="#f2f2f2"/><path d="M5.500 60l14-2 3.500 26-9 2z" fill="#a6a6a6"/><path d="M8 62l6-1 1.500 9-5 1z" fill="#c4c4c4"/><rect x="25" y="74.500" width="59.500" height="30" fill="#040404"/></g></svg>
<div class="t" id="t33" style="left:1374.90px;top:354.00px;font-size:16.0px;color:#c9cbc9;transform:scaleX(0.9952);">me</div>
<div class="t" id="t34" style="left:1576.70px;top:354.00px;font-size:16.0px;color:#c9cbc9;transform:scaleX(0.9674);">Aug 25, 2020</div>
<div class="t" id="t35" style="left:1674.32px;top:354.00px;font-size:16.0px;color:#c9cbc9;transform:scaleX(0.9762);">me</div>
<div class="b" style="left:1797.5px;top:367px;width:12.3px;height:1.5px;background:#c9cbc9;"></div>
<svg class="ic" style="left:2068.0px;top:358.6px;width:20px;height:20px" viewBox="0 0 24 24" fill="#c4c7c5" ><path d="M12 8c1.100 0 2-.9 2-2s-.9-2-2-2-2 .9-2 2 .9 2 2 2zm0 2c-1.100 0-2 .9-2 2s.9 2 2 2 2-.9 2-2-.9-2-2-2zm0 6c-1.100 0-2 .9-2 2s.9 2 2 2 2-.9 2-2-.9-2-2-2z"/></svg>
<div class="b" style="left:305px;top:394px;width:1802px;height:1px;background:#474747;"></div>
<div class="b" style="left:305px;top:395px;width:1803px;height:51px;background:#323232;"></div>
<svg class="ic" style="left:323.6px;top:408.5px;width:26.4px;height:26.4px" viewBox="0 0 24 24" fill="#cecece" ><path d="M10 4H4c-1.100 0-1.990.9-1.990 2L2 18c0 1.100.9 2 2 2h16c1.100 0 2-.9 2-2V8c0-1.100-.9-2-2-2h-8l-2-2z"/></svg>
<div class="t" id="t36" style="left:367.90px;top:408.00px;font-size:15.7px;color:#e3e3e3;-webkit-text-stroke:0.35px #e3e3e3;transform:scaleX(1.0526);">face model</div>
<svg class="ic av" style="left:1339.40px;top:407.60px;width:27px;height:27px" viewBox="0 0 100 100"><g><rect width="100" height="100" fill="#dfdfdf"/><path d="M34 36C42 29 60 28 67 34L65.500 53C62 66 42 66 37 53z" fill="#d4d4d4"/><path d="M29 36C25 12 40 1 52 2 67 2 75 14 70.500 31L68.500 39C64 29 46 30 36.500 35L31.500 43z" fill="#040404"/><path d="M60 33l8 1-1 7z" fill="#b8b8b8"/><path d="M38 40.500l9 2M55 42.500l9.500-2.500" stroke="#1c1c1c" stroke-width="2.200"/><ellipse cx="43" cy="45" rx="3.200" ry="1.400" fill="#3a3a3a"/><ellipse cx="59.500" cy="44.700" rx="3.200" ry="1.400" fill="#3a3a3a"/><path d="M50.500 45l-2.500 8h6z" fill="#bdbdbd"/><path d="M35.500 44C37 52 39 55 43 55.500L50 54l7 1.500C62 55 64.500 51 66.500 43L65 54C62 67 42 67 37 54z" fill="#161616"/><path d="M38 54C42 66 60 66 64.500 54 60 57 42 57 38 54z" fill="#121212"/><rect x="45" y="57.500" width="11" height="2" rx="1" fill="#c9c9c9"/><path d="M26 66C33 61 41 63 44 64.500M58 64.500C62 63 70 62 75 66" stroke="#9d9d9d" stroke-width="1.400" fill="none"/><rect x="22" y="67.500" width="70" height="8" fill="#f2f2f2"/><path d="M5.500 60l14-2 3.500 26-9 2z" fill="#a6a6a6"/><path d="M8 62l6-1 1.500 9-5 1z" fill="#c4c4c4"/><rect x="25" y="74.500" width="59.500" height="30" fill="#040404"/></g></svg>
<div class="t" id="t37" style="left:1374.90px;top:407.00px;font-size:16.0px;color:#c9cbc9;transform:scaleX(0.9952);">me</div>
<div class="t" id="t38" style="left:1576.70px;top:407.00px;font-size:16.0px;color:#c9cbc9;transform:scaleX(0.9642);">Aug 22, 2020</div>
<div class="t" id="t39" style="left:1674.02px;top:407.00px;font-size:16.0px;color:#c9cbc9;transform:scaleX(0.9762);">me</div>
<div class="b" style="left:1797.5px;top:420px;width:12.3px;height:1.5px;background:#c9cbc9;"></div>
<svg class="ic" style="left:2068.0px;top:411.6px;width:20px;height:20px" viewBox="0 0 24 24" fill="#c4c7c5" ><path d="M12 8c1.100 0 2-.9 2-2s-.9-2-2-2-2 .9-2 2 .9 2 2 2zm0 2c-1.100 0-2 .9-2 2s.9 2 2 2 2-.9 2-2-.9-2-2-2zm0 6c-1.100 0-2 .9-2 2s.9 2 2 2 2-.9 2-2-.9-2-2-2z"/></svg>
<svg class="ic" style="left:1909.5px;top:410.7px;width:20px;height:20px" viewBox="0 0 24 24" fill="#c4c7c5" ><path d="M9 12c2.210 0 4-1.790 4-4s-1.790-4-4-4-4 1.790-4 4 1.790 4 4 4zm0-6c1.100 0 2 .9 2 2s-.9 2-2 2-2-.9-2-2 .9-2 2-2zm0 8c-2.670 0-8 1.340-8 4v2h16v-2c0-2.660-5.330-4-8-4zm6 4H3v-.010C3.200 17.290 6.300 16 9 16s5.800 1.290 6 2zM20 9V6h-2v3h-3v2h3v3h2v-3h3V9h-3z"/></svg>
<svg class="ic" style="left:1949.0px;top:410.7px;width:20px;height:20px" viewBox="0 0 24 24" fill="#c4c7c5" ><path d="M12 16l-5-5 1.400-1.450 2.600 2.600V4h2v8.150l2.600-2.600L17 11l-5 5zM6 20c-.55 0-1.020-.2-1.410-.59C4.200 19.020 4 18.550 4 18v-3h2v3h12v-3h2v3c0 .55-.2 1.020-.59 1.410-.39.39-.86.59-1.410.59H6z"/></svg>
<svg class="ic" style="left:1989.0px;top:410.7px;width:20px;height:20px" viewBox="0 0 24 24" fill="#c4c7c5" ><path d="M15 16l-4 4h10v-4h-6zm-2.940-8.810L3 16.250V20h3.750l9.060-9.060-3.750-3.750zM5.920 18H5v-.92l7.060-7.060.92.92L5.920 18zm12.790-9.710a.996.996 0 000-1.410l-2.340-2.340a1.001 1.001 0 00-1.410 0l-1.830 1.830 3.750 3.750 1.830-1.830z"/></svg>
<svg class="ic" style="left:2029.0px;top:410.7px;width:20px;height:20px" viewBox="0 0 24 24" fill="#c4c7c5" ><path d="M22 9.240l-7.190-.62L12 2 9.190 8.630 2 9.240l5.460 4.730L5.820 21 12 17.270 18.180 21l-1.630-7.030L22 9.240zM12 15.400l-3.760 2.270 1-4.280-3.320-2.880 4.380-.38L12 6.100l1.710 4.040 4.380.38-3.320 2.880 1 4.280L12 15.400z"/></svg>
<div class="b" style="left:305px;top:446px;width:1802px;height:1px;background:#474747;"></div>
<svg class="ic" style="left:323.6px;top:460.5px;width:26.4px;height:26.4px" viewBox="0 0 24 24" fill="#cecece" ><path d="M10 4H4c-1.100 0-1.990.9-1.990 2L2 18c0 1.100.9 2 2 2h16c1.100 0 2-.9 2-2V8c0-1.100-.9-2-2-2h-8l-2-2z"/></svg>
<div class="t" id="t40" style="left:367.90px;top:460.00px;font-size:15.7px;color:#e3e3e3;-webkit-text-stroke:0.35px #e3e3e3;transform:scaleX(0.9515);">_MD</div>
<svg class="ic av" style="left:1339.40px;top:459.60px;width:27px;height:27px" viewBox="0 0 100 100"><g><rect width="100" height="100" fill="#dfdfdf"/><path d="M34 36C42 29 60 28 67 34L65.500 53C62 66 42 66 37 53z" fill="#d4d4d4"/><path d="M29 36C25 12 40 1 52 2 67 2 75 14 70.500 31L68.500 39C64 29 46 30 36.500 35L31.500 43z" fill="#040404"/><path d="M60 33l8 1-1 7z" fill="#b8b8b8"/><path d="M38 40.500l9 2M55 42.500l9.500-2.500" stroke="#1c1c1c" stroke-width="2.200"/><ellipse cx="43" cy="45" rx="3.200" ry="1.400" fill="#3a3a3a"/><ellipse cx="59.500" cy="44.700" rx="3.200" ry="1.400" fill="#3a3a3a"/><path d="M50.500 45l-2.500 8h6z" fill="#bdbdbd"/><path d="M35.500 44C37 52 39 55 43 55.500L50 54l7 1.500C62 55 64.500 51 66.500 43L65 54C62 67 42 67 37 54z" fill="#161616"/><path d="M38 54C42 66 60 66 64.500 54 60 57 42 57 38 54z" fill="#121212"/><rect x="45" y="57.500" width="11" height="2" rx="1" fill="#c9c9c9"/><path d="M26 66C33 61 41 63 44 64.500M58 64.500C62 63 70 62 75 66" stroke="#9d9d9d" stroke-width="1.400" fill="none"/><rect x="22" y="67.500" width="70" height="8" fill="#f2f2f2"/><path d="M5.500 60l14-2 3.500 26-9 2z" fill="#a6a6a6"/><path d="M8 62l6-1 1.500 9-5 1z" fill="#c4c4c4"/><rect x="25" y="74.500" width="59.500" height="30" fill="#040404"/></g></svg>
<div class="t" id="t41" style="left:1374.90px;top:459.00px;font-size:16.0px;color:#c9cbc9;transform:scaleX(0.9952);">me</div>
<div class="t" id="t42" style="left:1576.70px;top:459.00px;font-size:16.0px;color:#c9cbc9;transform:scaleX(0.9705);">Aug 24, 2020</div>
<div class="t" id="t43" style="left:1674.62px;top:459.00px;font-size:16.0px;color:#c9cbc9;transform:scaleX(0.9762);">me</div>
<div class="b" style="left:1797.5px;top:472px;width:12.3px;height:1.5px;background:#c9cbc9;"></div>
<svg class="ic" style="left:2068.0px;top:463.6px;width:20px;height:20px" viewBox="0 0 24 24" fill="#c4c7c5" ><path d="M12 8c1.100 0 2-.9 2-2s-.9-2-2-2-2 .9-2 2 .9 2 2 2zm0 2c-1.100 0-2 .9-2 2s.9 2 2 2 2-.9 2-2-.9-2-2-2zm0 6c-1.100 0-2 .9-2 2s.9 2 2 2 2-.9 2-2-.9-2-2-2z"/></svg>
<div class="b" style="left:305px;top:499px;width:1802px;height:1px;background:#474747;"></div>
<svg class="ic" style="left:332.400px;top:520.9px;width:8.800px;height:12px" viewBox="0 0 9.600 12" fill="#8a8d8b"><path d="M0 0h9.600v1.800H0zM0 2.900h9.600v1.800H0zM0 5.800h9.600v1.800H0zM.6 8.600h8.400L4.800 12z"/></svg>
<div class="t" id="t44" style="left:367.90px;top:513.00px;font-size:15.7px;color:#e3e3e3;-webkit-text-stroke:0.35px #e3e3e3;transform:scaleX(0.9975);">XANDER_A006C009_shot_01_CameraPackage_v001.rar</div>
<svg class="ic av" style="left:1339.40px;top:512.60px;width:27px;height:27px" viewBox="0 0 100 100"><g><rect width="100" height="100" fill="#dfdfdf"/><path d="M34 36C42 29 60 28 67 34L65.500 53C62 66 42 66 37 53z" fill="#d4d4d4"/><path d="M29 36C25 12 40 1 52 2 67 2 75 14 70.500 31L68.500 39C64 29 46 30 36.500 35L31.500 43z" fill="#040404"/><path d="M60 33l8 1-1 7z" fill="#b8b8b8"/><path d="M38 40.500l9 2M55 42.500l9.500-2.500" stroke="#1c1c1c" stroke-width="2.200"/><ellipse cx="43" cy="45" rx="3.200" ry="1.400" fill="#3a3a3a"/><ellipse cx="59.500" cy="44.700" rx="3.200" ry="1.400" fill="#3a3a3a"/><path d="M50.500 45l-2.500 8h6z" fill="#bdbdbd"/><path d="M35.500 44C37 52 39 55 43 55.500L50 54l7 1.500C62 55 64.500 51 66.500 43L65 54C62 67 42 67 37 54z" fill="#161616"/><path d="M38 54C42 66 60 66 64.500 54 60 57 42 57 38 54z" fill="#121212"/><rect x="45" y="57.500" width="11" height="2" rx="1" fill="#c9c9c9"/><path d="M26 66C33 61 41 63 44 64.500M58 64.500C62 63 70 62 75 66" stroke="#9d9d9d" stroke-width="1.400" fill="none"/><rect x="22" y="67.500" width="70" height="8" fill="#f2f2f2"/><path d="M5.500 60l14-2 3.500 26-9 2z" fill="#a6a6a6"/><path d="M8 62l6-1 1.500 9-5 1z" fill="#c4c4c4"/><rect x="25" y="74.500" width="59.500" height="30" fill="#040404"/></g></svg>
<div class="t" id="t45" style="left:1374.90px;top:512.00px;font-size:16.0px;color:#c9cbc9;transform:scaleX(0.9952);">me</div>
<div class="t" id="t46" style="left:1576.70px;top:512.00px;font-size:16.0px;color:#c9cbc9;transform:scaleX(0.9463);">Aug 21, 2020</div>
<div class="t" id="t47" style="left:1672.32px;top:512.00px;font-size:16.0px;color:#c9cbc9;transform:scaleX(0.9762);">me</div>
<div class="t" id="t48" style="left:1795.92px;top:512.00px;font-size:16.0px;color:#c9cbc9;transform:scaleX(0.9836);">240.2 MB</div>
<svg class="ic" style="left:2068.0px;top:516.6px;width:20px;height:20px" viewBox="0 0 24 24" fill="#c4c7c5" ><path d="M12 8c1.100 0 2-.9 2-2s-.9-2-2-2-2 .9-2 2 .9 2 2 2zm0 2c-1.100 0-2 .9-2 2s.9 2 2 2 2-.9 2-2-.9-2-2-2zm0 6c-1.100 0-2 .9-2 2s.9 2 2 2 2-.9 2-2-.9-2-2-2z"/></svg>
<div class="b" style="left:305px;top:552px;width:1802px;height:1px;background:#474747;"></div>
<svg class="ic" style="left:330.10px;top:570.50px;width:14.20px;height:18.60px" viewBox="0 0 14.200 18.600"><path d="M1.800 0H8.800L14.200 5.300V16.800a1.800 1.800 0 0 1-1.800 1.800H1.800A1.800 1.800 0 0 1 0 16.800V1.800A1.800 1.800 0 0 1 1.800 0z" fill="#1f7efc"/><path d="M7.900 1.500L12.900 6.400H7.900z" fill="#e4e6ea"/></svg>
<div class="t" id="t49" style="left:366.91px;top:566.00px;font-size:15.7px;color:#e3e3e3;-webkit-text-stroke:0.35px #e3e3e3;transform:scaleX(0.9875);">receptionist_CU_19_REN.c4d</div>
<svg class="ic av" style="left:1339.40px;top:565.60px;width:27px;height:27px" viewBox="0 0 100 100"><g><rect width="100" height="100" fill="#dfdfdf"/><path d="M34 36C42 29 60 28 67 34L65.500 53C62 66 42 66 37 53z" fill="#d4d4d4"/><path d="M29 36C25 12 40 1 52 2 67 2 75 14 70.500 31L68.500 39C64 29 46 30 36.500 35L31.500 43z" fill="#040404"/><path d="M60 33l8 1-1 7z" fill="#b8b8b8"/><path d="M38 40.500l9 2M55 42.500l9.500-2.500" stroke="#1c1c1c" stroke-width="2.200"/><ellipse cx="43" cy="45" rx="3.200" ry="1.400" fill="#3a3a3a"/><ellipse cx="59.500" cy="44.700" rx="3.200" ry="1.400" fill="#3a3a3a"/><path d="M50.500 45l-2.500 8h6z" fill="#bdbdbd"/><path d="M35.500 44C37 52 39 55 43 55.500L50 54l7 1.500C62 55 64.500 51 66.500 43L65 54C62 67 42 67 37 54z" fill="#161616"/><path d="M38 54C42 66 60 66 64.500 54 60 57 42 57 38 54z" fill="#121212"/><rect x="45" y="57.500" width="11" height="2" rx="1" fill="#c9c9c9"/><path d="M26 66C33 61 41 63 44 64.500M58 64.500C62 63 70 62 75 66" stroke="#9d9d9d" stroke-width="1.400" fill="none"/><rect x="22" y="67.500" width="70" height="8" fill="#f2f2f2"/><path d="M5.500 60l14-2 3.500 26-9 2z" fill="#a6a6a6"/><path d="M8 62l6-1 1.500 9-5 1z" fill="#c4c4c4"/><rect x="25" y="74.500" width="59.500" height="30" fill="#040404"/></g></svg>
<div class="t" id="t50" style="left:1374.90px;top:565.00px;font-size:16.0px;color:#c9cbc9;transform:scaleX(0.9952);">me</div>
<div class="t" id="t51" style="left:1576.70px;top:565.00px;font-size:16.0px;color:#c9cbc9;transform:scaleX(0.9432);">Aug 27, 2020</div>
<div class="t" id="t52" style="left:1672.02px;top:565.00px;font-size:16.0px;color:#c9cbc9;transform:scaleX(0.9762);">me</div>
<div class="t" id="t53" style="left:1795.96px;top:565.00px;font-size:16.0px;color:#c9cbc9;transform:scaleX(0.9358);">194.2 MB</div>
<svg class="ic" style="left:2068.0px;top:569.6px;width:20px;height:20px" viewBox="0 0 24 24" fill="#c4c7c5" ><path d="M12 8c1.100 0 2-.9 2-2s-.9-2-2-2-2 .9-2 2 .9 2 2 2zm0 2c-1.100 0-2 .9-2 2s.9 2 2 2 2-.9 2-2-.9-2-2-2zm0 6c-1.100 0-2 .9-2 2s.9 2 2 2 2-.9 2-2-.9-2-2-2z"/></svg>
<div class="b" style="left:305px;top:605px;width:1802px;height:1px;background:#474747;"></div>
<div class="b" style="left:305px;top:606px;width:1803px;height:52.5px;background:#04507e;"></div>
<svg class="ic" style="left:330.10px;top:623.50px;width:14.20px;height:18.60px" viewBox="0 0 14.200 18.600"><path d="M1.800 0H8.800L14.200 5.300V16.800a1.800 1.800 0 0 1-1.800 1.800H1.800A1.800 1.800 0 0 1 0 16.800V1.800A1.800 1.800 0 0 1 1.800 0z" fill="#1f7efc"/><path d="M7.900 1.500L12.900 6.400H7.900z" fill="#e4e6ea"/></svg>
<div class="t" id="t54" style="left:366.88px;top:619.00px;font-size:15.7px;color:#e3e3e3;-webkit-text-stroke:0.35px #e3e3e3;transform:scaleX(1.0173);">receptionist_CU_18_shading_done_animation_done.c4d</div>
<svg class="ic av" style="left:1339.40px;top:618.60px;width:27px;height:27px" viewBox="0 0 100 100"><g><rect width="100" height="100" fill="#dfdfdf"/><path d="M34 36C42 29 60 28 67 34L65.500 53C62 66 42 66 37 53z" fill="#d4d4d4"/><path d="M29 36C25 12 40 1 52 2 67 2 75 14 70.500 31L68.500 39C64 29 46 30 36.500 35L31.500 43z" fill="#040404"/><path d="M60 33l8 1-1 7z" fill="#b8b8b8"/><path d="M38 40.500l9 2M55 42.500l9.500-2.500" stroke="#1c1c1c" stroke-width="2.200"/><ellipse cx="43" cy="45" rx="3.200" ry="1.400" fill="#3a3a3a"/><ellipse cx="59.500" cy="44.700" rx="3.200" ry="1.400" fill="#3a3a3a"/><path d="M50.500 45l-2.500 8h6z" fill="#bdbdbd"/><path d="M35.500 44C37 52 39 55 43 55.500L50 54l7 1.500C62 55 64.500 51 66.500 43L65 54C62 67 42 67 37 54z" fill="#161616"/><path d="M38 54C42 66 60 66 64.500 54 60 57 42 57 38 54z" fill="#121212"/><rect x="45" y="57.500" width="11" height="2" rx="1" fill="#c9c9c9"/><path d="M26 66C33 61 41 63 44 64.500M58 64.500C62 63 70 62 75 66" stroke="#9d9d9d" stroke-width="1.400" fill="none"/><rect x="22" y="67.500" width="70" height="8" fill="#f2f2f2"/><path d="M5.500 60l14-2 3.500 26-9 2z" fill="#a6a6a6"/><path d="M8 62l6-1 1.500 9-5 1z" fill="#c4c4c4"/><rect x="25" y="74.500" width="59.500" height="30" fill="#040404"/></g></svg>
<div class="t" id="t55" style="left:1374.90px;top:618.00px;font-size:16.0px;color:#c2e7ff;transform:scaleX(0.9952);">me</div>
<div class="t" id="t56" style="left:1575.74px;top:618.00px;font-size:16.0px;color:#c2e7ff;transform:scaleX(0.9632);">8:10 PM</div>
<div class="t" id="t57" style="left:1637.32px;top:618.00px;font-size:16.0px;color:#c2e7ff;transform:scaleX(0.9762);">me</div>
<div class="t" id="t58" style="left:1795.96px;top:618.00px;font-size:16.0px;color:#c2e7ff;transform:scaleX(0.9358);">195.3 MB</div>
<svg class="ic" style="left:2068.0px;top:622.6px;width:20px;height:20px" viewBox="0 0 24 24" fill="#e3e3e3" ><path d="M12 8c1.100 0 2-.9 2-2s-.9-2-2-2-2 .9-2 2 .9 2 2 2zm0 2c-1.100 0-2 .9-2 2s.9 2 2 2 2-.9 2-2-.9-2-2-2zm0 6c-1.100 0-2 .9-2 2s.9 2 2 2 2-.9 2-2-.9-2-2-2z"/></svg>
<svg class="ic" style="left:330.10px;top:676.50px;width:14.20px;height:18.60px" viewBox="0 0 14.200 18.600"><path d="M1.800 0H8.800L14.200 5.300V16.800a1.800 1.800 0 0 1-1.800 1.800H1.800A1.800 1.800 0 0 1 0 16.800V1.800A1.800 1.800 0 0 1 1.800 0z" fill="#1f7efc"/><path d="M7.900 1.500L12.900 6.400H7.900z" fill="#e4e6ea"/></svg>
<div class="t" id="t59" style="left:366.88px;top:672.00px;font-size:15.7px;color:#e3e3e3;-webkit-text-stroke:0.35px #e3e3e3;transform:scaleX(1.0159);">receptionist_27_REN.c4d</div>
<svg class="ic av" style="left:1339.40px;top:671.60px;width:27px;height:27px" viewBox="0 0 100 100"><g><rect width="100" height="100" fill="#dfdfdf"/><path d="M34 36C42 29 60 28 67 34L65.500 53C62 66 42 66 37 53z" fill="#d4d4d4"/><path d="M29 36C25 12 40 1 52 2 67 2 75 14 70.500 31L68.500 39C64 29 46 30 36.500 35L31.500 43z" fill="#040404"/><path d="M60 33l8 1-1 7z" fill="#b8b8b8"/><path d="M38 40.500l9 2M55 42.500l9.500-2.500" stroke="#1c1c1c" stroke-width="2.200"/><ellipse cx="43" cy="45" rx="3.200" ry="1.400" fill="#3a3a3a"/><ellipse cx="59.500" cy="44.700" rx="3.200" ry="1.400" fill="#3a3a3a"/><path d="M50.500 45l-2.500 8h6z" fill="#bdbdbd"/><path d="M35.500 44C37 52 39 55 43 55.500L50 54l7 1.500C62 55 64.500 51 66.500 43L65 54C62 67 42 67 37 54z" fill="#161616"/><path d="M38 54C42 66 60 66 64.500 54 60 57 42 57 38 54z" fill="#121212"/><rect x="45" y="57.500" width="11" height="2" rx="1" fill="#c9c9c9"/><path d="M26 66C33 61 41 63 44 64.500M58 64.500C62 63 70 62 75 66" stroke="#9d9d9d" stroke-width="1.400" fill="none"/><rect x="22" y="67.500" width="70" height="8" fill="#f2f2f2"/><path d="M5.500 60l14-2 3.500 26-9 2z" fill="#a6a6a6"/><path d="M8 62l6-1 1.500 9-5 1z" fill="#c4c4c4"/><rect x="25" y="74.500" width="59.500" height="30" fill="#040404"/></g></svg>
<div class="t" id="t60" style="left:1374.90px;top:671.00px;font-size:16.0px;color:#c9cbc9;transform:scaleX(0.9952);">me</div>
<div class="t" id="t61" style="left:1576.70px;top:671.00px;font-size:16.0px;color:#c9cbc9;transform:scaleX(0.9815);">Jan 30, 2026</div>
<div class="t" id="t62" style="left:1672.72px;top:671.00px;font-size:16.0px;color:#c9cbc9;transform:scaleX(0.9762);">me</div>
<div class="t" id="t63" style="left:1795.87px;top:671.00px;font-size:16.0px;color:#c9cbc9;transform:scaleX(1.0250);">30 MB</div>
<svg class="ic" style="left:2068.0px;top:675.6px;width:20px;height:20px" viewBox="0 0 24 24" fill="#c4c7c5" ><path d="M12 8c1.100 0 2-.9 2-2s-.9-2-2-2-2 .9-2 2 .9 2 2 2zm0 2c-1.100 0-2 .9-2 2s.9 2 2 2 2-.9 2-2-.9-2-2-2zm0 6c-1.100 0-2 .9-2 2s.9 2 2 2 2-.9 2-2-.9-2-2-2z"/></svg>
<div class="b" style="left:305px;top:710px;width:1802px;height:1px;background:#474747;"></div>
<svg class="ic" style="left:330.10px;top:728.50px;width:14.20px;height:18.60px" viewBox="0 0 14.200 18.600"><path d="M1.800 0H8.800L14.200 5.300V16.800a1.800 1.800 0 0 1-1.800 1.800H1.800A1.800 1.800 0 0 1 0 16.800V1.800A1.800 1.800 0 0 1 1.800 0z" fill="#1f7efc"/><path d="M7.900 1.500L12.900 6.400H7.900z" fill="#e4e6ea"/></svg>
<div class="t" id="t64" style="left:366.87px;top:724.00px;font-size:15.7px;color:#e3e3e3;-webkit-text-stroke:0.35px #e3e3e3;transform:scaleX(1.0342);">receptionist_25_advancing_back_wall.c4d</div>
<svg class="ic av" style="left:1339.40px;top:723.60px;width:27px;height:27px" viewBox="0 0 100 100"><g><rect width="100" height="100" fill="#dfdfdf"/><path d="M34 36C42 29 60 28 67 34L65.500 53C62 66 42 66 37 53z" fill="#d4d4d4"/><path d="M29 36C25 12 40 1 52 2 67 2 75 14 70.500 31L68.500 39C64 29 46 30 36.500 35L31.500 43z" fill="#040404"/><path d="M60 33l8 1-1 7z" fill="#b8b8b8"/><path d="M38 40.500l9 2M55 42.500l9.500-2.500" stroke="#1c1c1c" stroke-width="2.200"/><ellipse cx="43" cy="45" rx="3.200" ry="1.400" fill="#3a3a3a"/><ellipse cx="59.500" cy="44.700" rx="3.200" ry="1.400" fill="#3a3a3a"/><path d="M50.500 45l-2.500 8h6z" fill="#bdbdbd"/><path d="M35.500 44C37 52 39 55 43 55.500L50 54l7 1.500C62 55 64.500 51 66.500 43L65 54C62 67 42 67 37 54z" fill="#161616"/><path d="M38 54C42 66 60 66 64.500 54 60 57 42 57 38 54z" fill="#121212"/><rect x="45" y="57.500" width="11" height="2" rx="1" fill="#c9c9c9"/><path d="M26 66C33 61 41 63 44 64.500M58 64.500C62 63 70 62 75 66" stroke="#9d9d9d" stroke-width="1.400" fill="none"/><rect x="22" y="67.500" width="70" height="8" fill="#f2f2f2"/><path d="M5.500 60l14-2 3.500 26-9 2z" fill="#a6a6a6"/><path d="M8 62l6-1 1.500 9-5 1z" fill="#c4c4c4"/><rect x="25" y="74.500" width="59.500" height="30" fill="#040404"/></g></svg>
<div class="t" id="t65" style="left:1374.90px;top:723.00px;font-size:16.0px;color:#c9cbc9;transform:scaleX(0.9952);">me</div>
<div class="t" id="t66" style="left:1576.70px;top:723.00px;font-size:16.0px;color:#c9cbc9;transform:scaleX(0.9674);">Aug 26, 2020</div>
<div class="t" id="t67" style="left:1674.32px;top:723.00px;font-size:16.0px;color:#c9cbc9;transform:scaleX(0.9762);">me</div>
<div class="t" id="t68" style="left:1795.94px;top:723.00px;font-size:16.0px;color:#c9cbc9;transform:scaleX(0.9567);">180.8 MB</div>
<svg class="ic" style="left:2068.0px;top:727.6px;width:20px;height:20px" viewBox="0 0 24 24" fill="#c4c7c5" ><path d="M12 8c1.100 0 2-.9 2-2s-.9-2-2-2-2 .9-2 2 .9 2 2 2zm0 2c-1.100 0-2 .9-2 2s.9 2 2 2 2-.9 2-2-.9-2-2-2zm0 6c-1.100 0-2 .9-2 2s.9 2 2 2 2-.9 2-2-.9-2-2-2z"/></svg>
<div class="b" style="left:305px;top:763px;width:1802px;height:1px;background:#474747;"></div>
<svg class="ic" style="left:775.0px;top:622.0px;width:19.5px;height:19.5px" viewBox="0 0 24 24" fill="#c9cbc9" ><path d="M16 11c1.660 0 2.990-1.340 2.990-3S17.660 5 16 5c-1.660 0-3 1.340-3 3s1.340 3 3 3zm-8 0c1.660 0 2.990-1.340 2.990-3S9.660 5 8 5C6.340 5 5 6.340 5 8s1.340 3 3 3zm0 2c-2.330 0-7 1.170-7 3.500V19h14v-2.500c0-2.330-4.670-3.500-7-3.500zm8 0c-.29 0-.62.02-.97.05 1.160.84 1.970 1.970 1.970 3.450V19h6v-2.500c0-2.330-4.670-3.500-7-3.500z"/></svg>
<svg class="ic" style="left:555.2px;top:674.6px;width:19.5px;height:19.5px" viewBox="0 0 24 24" fill="#c9cbc9" ><path d="M16 11c1.660 0 2.990-1.340 2.990-3S17.660 5 16 5c-1.660 0-3 1.340-3 3s1.340 3 3 3zm-8 0c1.660 0 2.990-1.340 2.990-3S9.660 5 8 5C6.340 5 5 6.340 5 8s1.340 3 3 3zm0 2c-2.330 0-7 1.170-7 3.500V19h14v-2.500c0-2.330-4.670-3.500-7-3.500zm8 0c-.29 0-.62.02-.97.05 1.160.84 1.970 1.970 1.970 3.450V19h6v-2.500c0-2.330-4.670-3.500-7-3.500z"/></svg>
<div class="b" style="left:2146.4px;top:60px;width:351.6px;height:1290px;background:#232323;border-radius:18px;"></div>
<svg class="ic" style="left:2175.90px;top:86.47px;width:17.60px;height:23.05px" viewBox="0 0 14.200 18.600"><path d="M1.800 0H8.800L14.200 5.300V16.800a1.800 1.800 0 0 1-1.800 1.800H1.800A1.800 1.800 0 0 1 0 16.800V1.800A1.800 1.800 0 0 1 1.800 0z" fill="#1f7efc"/><path d="M7.900 1.500L12.900 6.400H7.900z" fill="#e4e6ea"/></svg>
<div class="t" id="t69" style="left:2214.13px;top:82.00px;font-size:18.6px;color:#e3e3e3;-webkit-text-stroke:0.25px #e3e3e3;transform:scaleX(0.9721);">receptionist_CU_18_shadin</div>
<div class="t" id="t70" style="left:2214.11px;top:108.00px;font-size:18.6px;color:#e3e3e3;-webkit-text-stroke:0.25px #e3e3e3;transform:scaleX(0.9899);">g_done_animation_done.c</div>
<div class="t" id="t71" style="left:2215.10px;top:135.00px;font-size:18.6px;color:#e3e3e3;-webkit-text-stroke:0.25px #e3e3e3;transform:scaleX(1.0300);">4d</div>
<svg class="ic" style="left:2455.2px;top:85.1px;width:25.2px;height:25.2px" viewBox="0 0 24 24" fill="#e3e3e3" ><path d="M19 6.410L17.590 5 12 10.590 6.410 5 5 6.410 10.590 12 5 17.590 6.410 19 12 13.410 17.590 19 19 17.590 13.410 12z"/></svg>
<div class="t" id="t72" style="left:2207.84px;top:200.00px;font-size:15.5px;color:#a8c7fa;-webkit-text-stroke:0.45px #a8c7fa;transform:scaleX(1.0630);">Details</div>
<div class="t" id="t73" style="left:2382.00px;top:200.00px;font-size:15.5px;color:#e3e3e3;-webkit-text-stroke:0.45px #e3e3e3;transform:scaleX(1.1041);">Activity</div>
<div class="b" style="left:2210px;top:237px;width:45px;height:3.5px;background:#a8c7fa;border-radius:3px 3px 0 0;"></div>
<div class="b" style="left:2146.4px;top:240px;width:351.6px;height:1px;background:#474747;"></div>
<div class="b" style="left:2490.2px;top:241.5px;width:7.7px;height:1100px;background:#4c4c4c;border-radius:3.8px;"></div>
<svg class="ic" style="left:2282.600px;top:301.600px;width:70.200px;height:87.800px" viewBox="0 0 70.200 87.800"><path d="M8 0h35.300l26.900 26.900v52.900a8 8 0 0 1-8 8H8a8 8 0 0 1-8-8V8a8 8 0 0 1 8-8z" fill="#6b7075"/><path d="M39.500 8.500l21.800 22.500H39.500z" fill="#232323"/></svg>
<div class="t" id="t74" style="left:2164.10px;top:465.00px;font-size:18.3px;color:#e3e3e3;-webkit-text-stroke:0.5px #e3e3e3;transform:scaleX(0.9739);">Who has access</div>
<svg class="ic av" style="left:2163.80px;top:502.60px;width:35.4px;height:35.4px" viewBox="0 0 100 100"><g><rect width="100" height="100" fill="#dfdfdf"/><path d="M34 36C42 29 60 28 67 34L65.500 53C62 66 42 66 37 53z" fill="#d4d4d4"/><path d="M29 36C25 12 40 1 52 2 67 2 75 14 70.500 31L68.500 39C64 29 46 30 36.500 35L31.500 43z" fill="#040404"/><path d="M60 33l8 1-1 7z" fill="#b8b8b8"/><path d="M38 40.500l9 2M55 42.500l9.500-2.500" stroke="#1c1c1c" stroke-width="2.200"/><ellipse cx="43" cy="45" rx="3.200" ry="1.400" fill="#3a3a3a"/><ellipse cx="59.500" cy="44.700" rx="3.200" ry="1.400" fill="#3a3a3a"/><path d="M50.500 45l-2.500 8h6z" fill="#bdbdbd"/><path d="M35.500 44C37 52 39 55 43 55.500L50 54l7 1.500C62 55 64.500 51 66.500 43L65 54C62 67 42 67 37 54z" fill="#161616"/><path d="M38 54C42 66 60 66 64.500 54 60 57 42 57 38 54z" fill="#121212"/><rect x="45" y="57.500" width="11" height="2" rx="1" fill="#c9c9c9"/><path d="M26 66C33 61 41 63 44 64.500M58 64.500C62 63 70 62 75 66" stroke="#9d9d9d" stroke-width="1.400" fill="none"/><rect x="22" y="67.500" width="70" height="8" fill="#f2f2f2"/><path d="M5.500 60l14-2 3.500 26-9 2z" fill="#a6a6a6"/><path d="M8 62l6-1 1.500 9-5 1z" fill="#c4c4c4"/><rect x="25" y="74.500" width="59.500" height="30" fill="#040404"/></g></svg>
<div class="b" style="left:2208px;top:503px;width:1px;height:35px;background:#7d807e;"></div>
<div class="b" style="left:2217.2px;top:502.7px;width:35.5px;height:35.5px;background:#15612d;border-radius:18px;"></div>
<svg class="ic" style="left:2221.7px;top:507.1px;width:26.4px;height:26.4px" viewBox="0 0 24 24" fill="#b9ebc8" ><path d="M12 2C6.480 2 2 6.480 2 12s4.480 10 10 10 10-4.480 10-10S17.520 2 12 2zm-1 17.930c-3.950-.49-7-3.850-7-7.930 0-.62.08-1.210.21-1.790L9 15v1c0 1.100.9 2 2 2v1.930zm6.900-2.540c-.26-.81-1-1.390-1.900-1.390h-1v-3c0-.55-.45-1-1-1H8v-2h2c.55 0 1-.45 1-1V7h2c1.100 0 2-.9 2-2v-.41c2.930 1.190 5 4.060 5 7.410 0 2.080-.8 3.970-2.100 5.390z"/></svg>
<div class="t" id="t75" style="left:2163.04px;top:541.00px;font-size:13.1px;color:#e3e3e3;transform:scaleX(1.0577);">Private to you</div>
<div class="b" style="left:2164px;top:577px;width:165px;height:44px;background:transparent;border-radius:22px;border:1px solid #9a9d9b;"></div>
<div class="t" id="t76" style="left:2190.28px;top:586.00px;font-size:15.5px;color:#a8c7fa;-webkit-text-stroke:0.45px #a8c7fa;transform:scaleX(1.0243);">Manage access</div>
<div class="b" style="left:2146px;top:652px;width:343.5px;height:1px;background:#474747;"></div>
<svg class="ic" style="left:2164.9px;top:680.9px;width:24.5px;height:24.5px" viewBox="0 0 24 24" fill="#e3e3e3" ><path d="M12 1L3 5v6c0 5.550 3.840 10.740 9 12 5.160-1.260 9-6.450 9-12V5l-9-4zm7 10c0 1.850-.51 3.650-1.380 5.210l-1.450-1.450c1.290-1.940 1.070-4.580-.64-6.290-1.950-1.950-5.120-1.950-7.070 0-1.950 1.950-1.950 5.120 0 7.070 1.710 1.710 4.350 1.920 6.290.64l1.720 1.720c-1.190 1.420-2.730 2.510-4.470 3.040-4.020-1.250-7-5.420-7-9.940V6.300l7-3.110 7 3.110V11zm-7 4c-1.660 0-3-1.340-3-3s1.340-3 3-3 3 1.340 3 3-1.340 3-3 3z"/></svg>
<div class="t" id="t77" style="left:2198.08px;top:678.00px;font-size:18.6px;color:#e3e3e3;-webkit-text-stroke:0.3px #e3e3e3;transform:scaleX(1.0201);">Security limitations</div>
<div class="b" style="left:2164.2px;top:724px;width:308.2px;height:77px;background:#2d2d2d;border-radius:13px;"></div>
<div class="t" id="t78" style="left:2180.38px;top:735.00px;font-size:12.6px;color:#e3e3e3;-webkit-text-stroke:0.4px #e3e3e3;transform:scaleX(1.1246);">No limitations applied</div>
<div class="t" id="t79" style="left:2180.47px;top:759.00px;font-size:13.1px;color:#e3e3e3;transform:scaleX(1.0344);">If any are applied, they will appear here</div>
<div class="b" style="left:2146px;top:827px;width:343.5px;height:1px;background:#474747;"></div>
<div class="t" id="t80" style="left:2162.90px;top:852.00px;font-size:18.3px;color:#e3e3e3;-webkit-text-stroke:0.5px #e3e3e3;transform:scaleX(1.0023);">File details</div>
<div class="t" id="t81" style="left:2163.90px;top:884.00px;font-size:12.3px;color:#e3e3e3;-webkit-text-stroke:0.4px #e3e3e3;transform:scaleX(1.1269);">Type</div>
<div class="t" id="t82" style="left:2162.91px;top:904.00px;font-size:16.0px;color:#d6d8d6;transform:scaleX(0.9864);">Binary</div>
<div class="t" id="t83" style="left:2163.90px;top:943.00px;font-size:12.3px;color:#e3e3e3;-webkit-text-stroke:0.4px #e3e3e3;transform:scaleX(1.0167);">Size</div>
<div class="t" id="t84" style="left:2162.99px;top:964.00px;font-size:16.0px;color:#d6d8d6;transform:scaleX(0.9104);">195.3 MB</div>
<div class="t" id="t85" style="left:2163.90px;top:1002.00px;font-size:12.3px;color:#e3e3e3;-webkit-text-stroke:0.4px #e3e3e3;transform:scaleX(1.1000);">Storage used</div>
<div class="t" id="t86" style="left:2162.99px;top:1023.00px;font-size:16.0px;color:#d6d8d6;transform:scaleX(0.9090);">195.3 MB</div>
<div class="t" id="t87" style="left:2162.72px;top:1062.00px;font-size:12.3px;color:#e3e3e3;-webkit-text-stroke:0.4px #e3e3e3;transform:scaleX(1.1844);">Location</div>
<div class="b" style="left:2164px;top:1090.3px;width:132px;height:34.8px;background:transparent;border-radius:8.5px;border:1px solid #9a9d9b;"></div>
<svg class="ic" style="left:2172.6px;top:1097.0px;width:20.2px;height:20.2px" viewBox="0 0 24 24" fill="#c9cbc9" ><path d="M9.170 6l2 2H20v10H4V6h5.170M10 4H4c-1.100 0-1.990.9-1.990 2L2 18c0 1.100.9 2 2 2h16c1.100 0 2-.9 2-2V8c0-1.100-.9-2-2-2h-8l-2-2z"/></svg>
<div class="t" id="t88" style="left:2197.08px;top:1093.00px;font-size:16.0px;color:#d6d8d6;transform:scaleX(0.9176);">RECEPTION</div>
<div class="t" id="t89" style="left:2163.90px;top:1143.00px;font-size:12.3px;color:#e3e3e3;-webkit-text-stroke:0.4px #e3e3e3;transform:scaleX(1.1667);">Owner</div>
<div class="t" id="t90" style="left:2162.86px;top:1164.00px;font-size:16.0px;color:#d6d8d6;transform:scaleX(1.0381);">me</div>
<div class="t" id="t91" style="left:2162.69px;top:1203.00px;font-size:12.3px;color:#e3e3e3;-webkit-text-stroke:0.4px #e3e3e3;transform:scaleX(1.2133);">Modified</div>
<div class="t" id="t92" style="left:2162.96px;top:1223.00px;font-size:16.0px;color:#d6d8d6;transform:scaleX(0.9369);">Mar 31, 2026 by me</div>
<svg class="ic" style="left:2304.8px;top:1224.4px;width:21.7px;height:21.7px" viewBox="0 0 24 24" fill="#c9cbc9" ><path d="M13 3c-4.970 0-9 4.030-9 9H1l3.890 3.890.07.14L9 12H6c0-3.870 3.130-7 7-7s7 3.130 7 7-3.130 7-7 7c-1.930 0-3.680-.79-4.940-2.060l-1.420 1.420C8.270 19.990 10.510 21 13 21c4.970 0 9-4.030 9-9s-4.030-9-9-9zm-1 5v5l4.280 2.540.72-1.210-3.500-2.080V8H12z"/></svg>
<div class="t" id="t93" style="left:2163.90px;top:1262.00px;font-size:12.3px;color:#e3e3e3;-webkit-text-stroke:0.4px #e3e3e3;transform:scaleX(1.1605);">Created</div>
<div class="t" id="t94" style="left:2163.90px;top:1282.00px;font-size:16.0px;color:#d6d8d6;transform:scaleX(0.9337);">Aug 27, 2020</div>
</body></html>
